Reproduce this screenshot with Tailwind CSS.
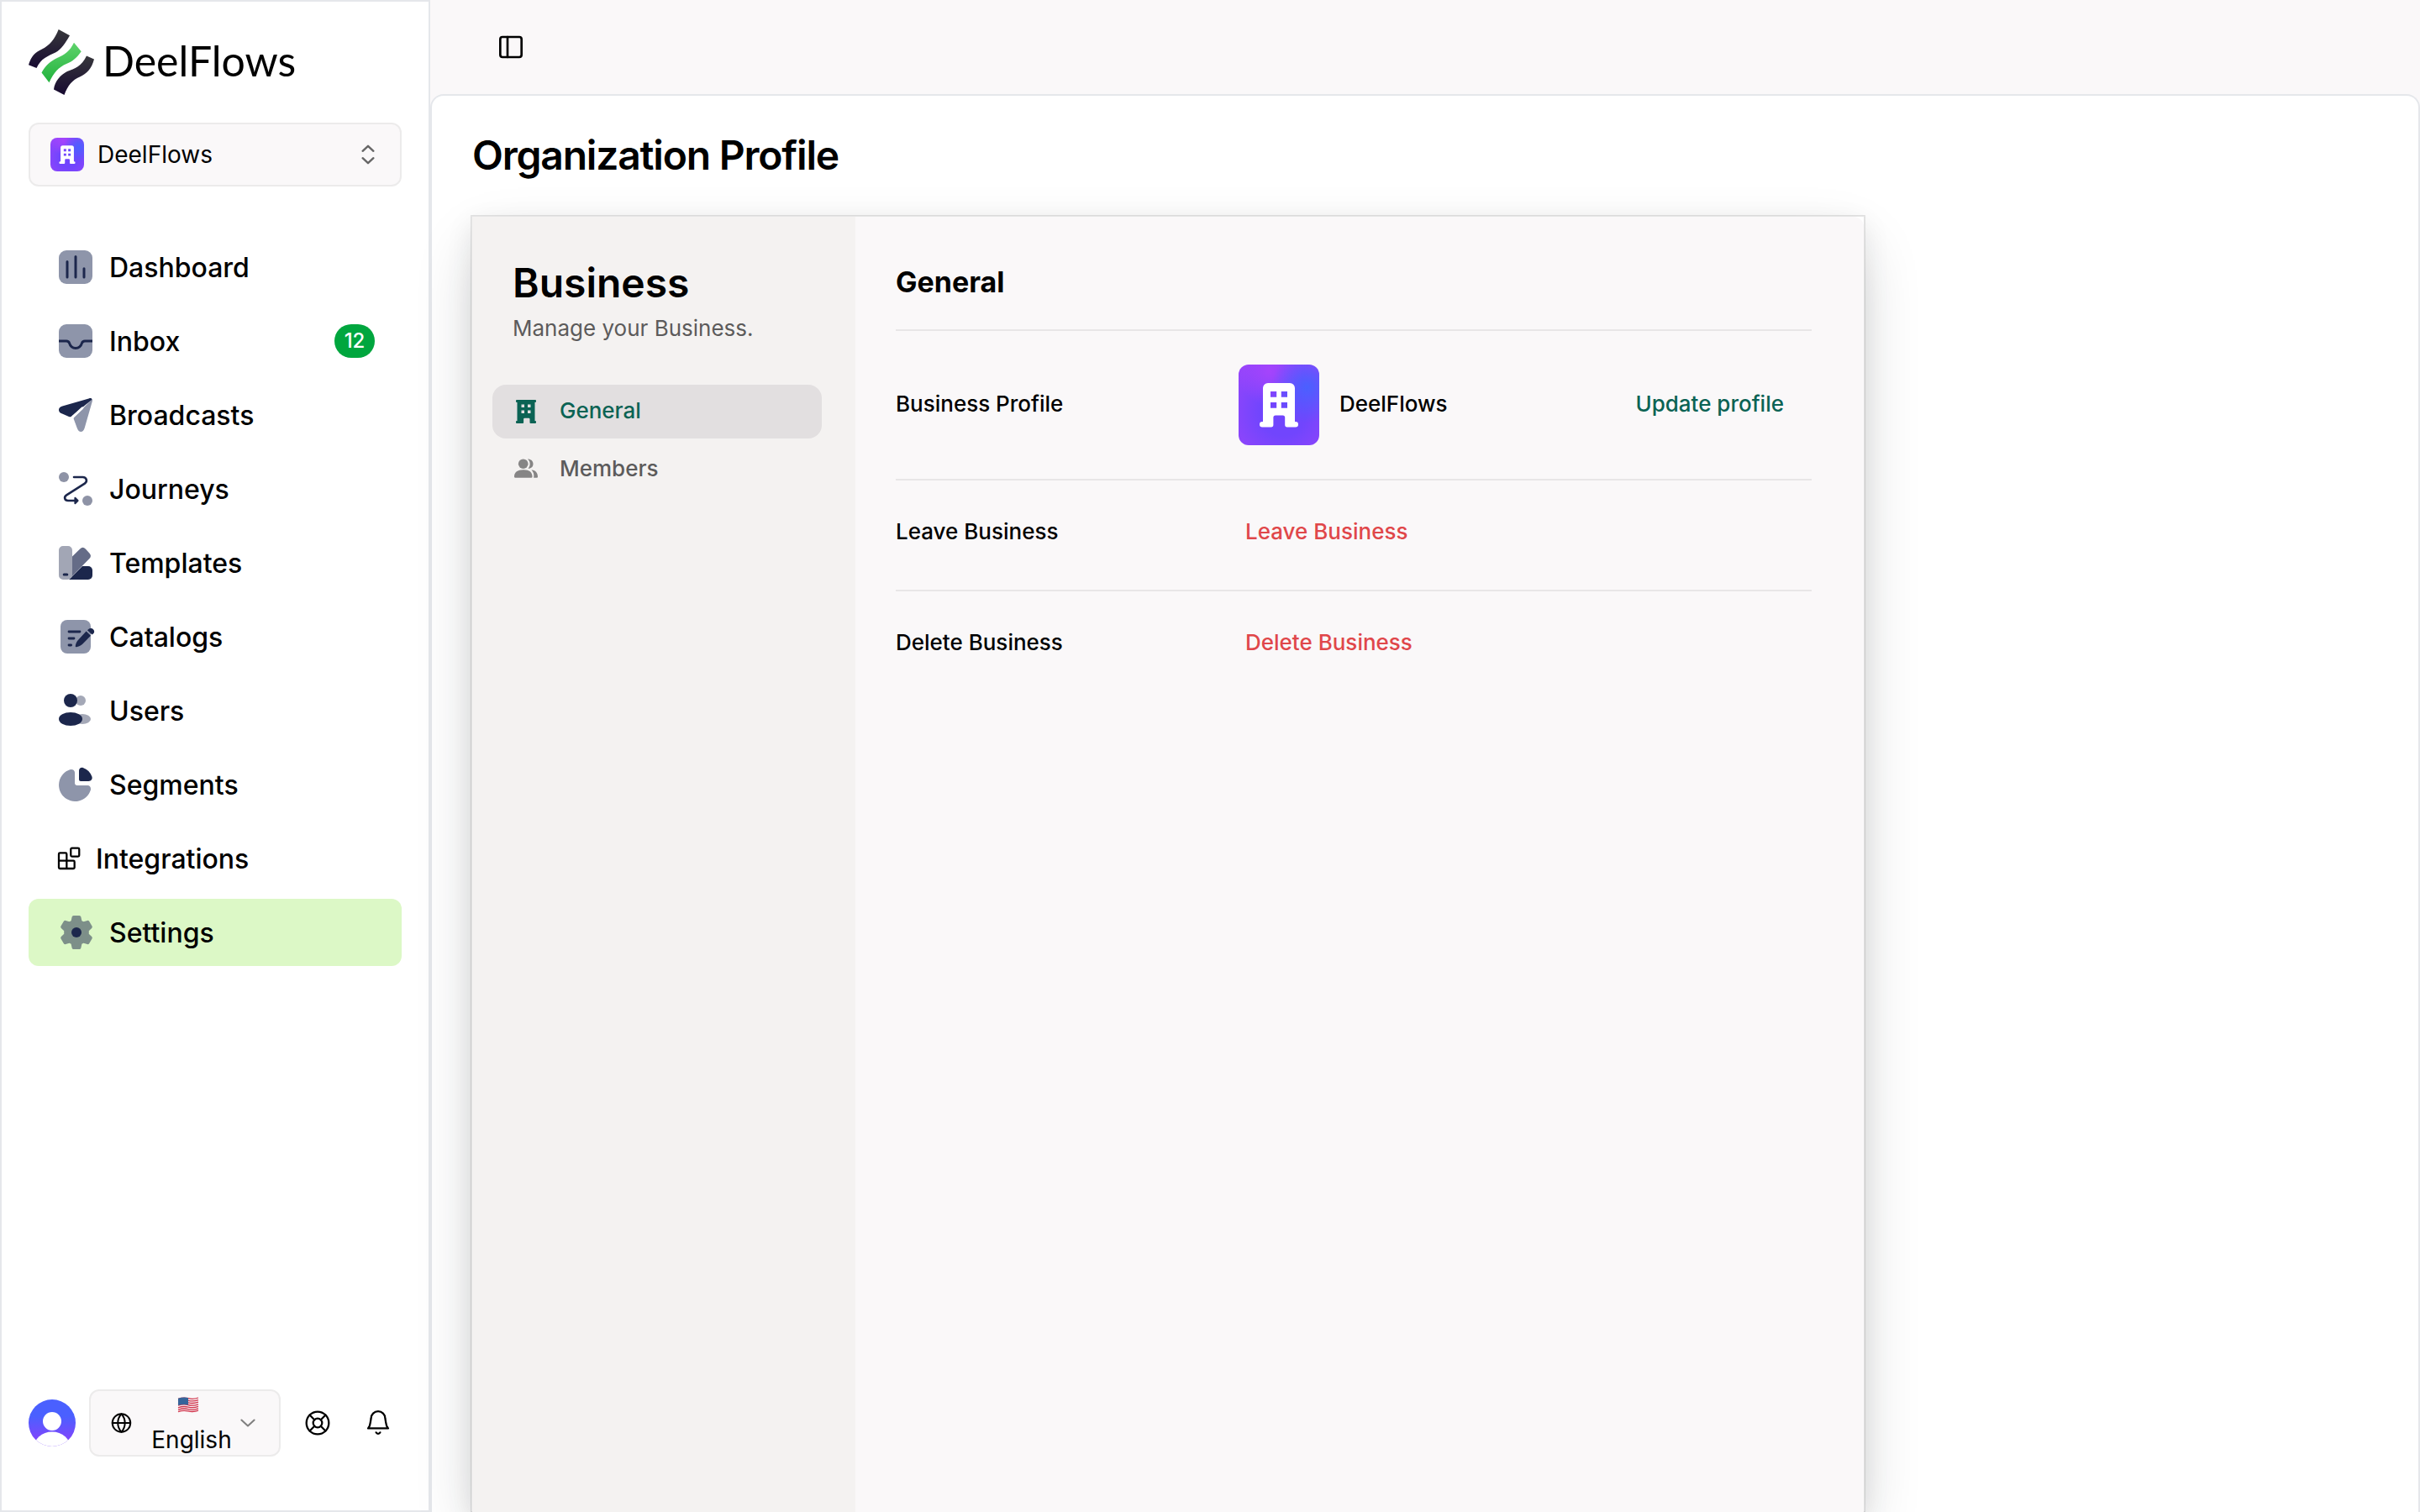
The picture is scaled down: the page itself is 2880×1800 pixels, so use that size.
<!DOCTYPE html>
<html lang="en">

<head>
  <meta charset="UTF-8" />
  <meta name="viewport" content="width=device-width, initial-scale=1" />
  <title>DeelFlows - Organization Profile</title>
  <script src="https://cdn.jsdelivr.net/npm/@tailwindcss/browser@4"></script>
</head>

<body class="flex h-screen overflow-hidden bg-[#faf8f9] font-['Inter',sans-serif] text-black antialiased">

  <!-- Shared symbols -->
  <svg class="hidden">
    <symbol id="building" viewBox="0 0 48 48">
      <path fill="currentColor" fill-rule="evenodd" d="M14.5 14a3 3 0 0 1 3-3h13a3 3 0 0 1 3 3v20h.4a1.6 1.6 0 0 1 1.6 1.6v0a1.6 1.6 0 0 1-1.6 1.6h-5a1.3 1.3 0 0 1-1.3-1.3v-4.4a1.3 1.3 0 0 0-1.3-1.3h-4.3a1.3 1.3 0 0 0-1.3 1.3v4.400a1.3 1.3 0 0 1-1.3 1.3h-5.3a1.6 1.6 0 0 1 0-3.200h.4zM19 16v3.4h3.6V16zm6.4 0v3.4h3.6V16zM19 22.5v3.4h3.6v-3.4zm6.4 0v3.4h3.6v-3.4z" />
    </symbol>
  </svg>

  <!-- Sidebar -->
  <aside class="flex w-[512px] shrink-0 flex-col border-2 border-[#e5e7eb] bg-white px-8">
    <div class="mt-8 flex h-[80px] items-center">
      <svg class="size-[80px] shrink-0" viewBox="0 0 80 80">
        <defs>
          <linearGradient id="dark" x1="0" y1="0" x2="0" y2="1">
            <stop offset="0" stop-color="#37373b" />
            <stop offset="1" stop-color="#170a31" />
          </linearGradient>
          <linearGradient id="green" x1="0" y1="0" x2="0" y2="1">
            <stop offset="0" stop-color="#5fd36c" />
            <stop offset="1" stop-color="#22b23d" />
          </linearGradient>
        </defs>
        <path fill="url(#dark)" d="M35.7 1 49 8.3C44 17 39 25 32 28.5C23 33 15 35 9.5 47L0 43.3C3 33 8 28 16 24.5C25 20 31 13 35.7 1Z" />
        <path fill="url(#green)" d="M54 16.700 62.7 27.3C57 35 53 39 45 42C36 46 30 52 24.5 64.3L15.5 52.5C20 44 26 39 34 35C43 31 49 27 54 16.700Z" />
        <path fill="url(#dark)" d="M69 32.5 78 36.5C75 48 69 54 61 57.500C52 61.500 47 67 42.5 79L30 72.5C31 63 38 55 46 51C55 47.500 63 45 69 32.5Z" />
      </svg>
      <span class="-mt-[5px] ml-[8px] font-['Lato',sans-serif] text-[50px] leading-none">DeelFlows</span>
    </div>

    <button class="mt-[32px] flex h-[76px] w-[444px] shrink-0 items-center rounded-xl border-2 border-[#ecebeb] bg-[#faf8f9] px-6">
      <span class="size-10 rounded-lg bg-[radial-gradient(circle_at_85%_28%,#4a60ff_0%,#4a60ff00_40%),radial-gradient(circle_at_38%_8%,#a544fc_0%,#a544fc00_38%),radial-gradient(circle_at_55%_60%,#7145fd_35%,#9a45fa_100%)] text-white">
        <svg class="size-10"><use href="#building" /></svg>
      </span>
      <span class="ml-4 text-[28px] leading-10">DeelFlows</span>
      <svg class="-mr-[2px] ml-auto size-8" viewBox="0 0 16 16" fill="none" stroke="#666" stroke-width="1.2" stroke-linecap="round" stroke-linejoin="round">
        <path d="M4.8 5.9 8 2.9l3.2 3M4.8 10.1 8 13.1l3.2-3" />
      </svg>
    </button>

    <nav class="mt-[56px] flex w-[444px] flex-col gap-2 text-[32px] font-medium leading-10">
      <a href="#" class="flex h-20 items-center gap-4 rounded-xl px-8">
        <svg class="size-12" viewBox="0 0 24 24">
          <rect x="2" y="2" width="20" height="20" rx="4.5" fill="#8e95aa" />
          <path d="M7 8.8v9.2M12 5.8v12.2M17 12.9v5.1" stroke="#1c274c" stroke-width="1.5" stroke-linecap="round" />
        </svg>
        <span class="pt-[2px]">Dashboard</span>
      </a>
      <a href="#" class="flex h-20 items-center gap-4 rounded-xl px-8">
        <svg class="size-12" viewBox="0 0 24 24">
          <rect x="2" y="2" width="20" height="20" rx="4.5" fill="#8e95aa" />
          <path d="M2 12h4.5c1 0 1.5.3 1.8 1.3.6 2 1.7 2.9 3.7 2.9s3.1-.9 3.7-2.9c.3-1 .8-1.3 1.8-1.3H22" fill="none" stroke="#1c274c" stroke-width="1.5" />
        </svg>
        <span class="pt-[2px]">Inbox</span>
        <span class="ml-auto flex h-10 w-12 items-center justify-center rounded-full bg-[#00a63e] text-2xl font-medium text-white">12</span>
      </a>
      <a href="#" class="flex h-20 items-center gap-4 rounded-xl px-8">
        <svg class="size-12" viewBox="0 0 24 24">
          <path fill="#8e95aa" d="M21.9 2.5c.2.4.1 1-.1 1.8l-4.5 15.6c-.8 2.8-3.5 2.8-4.4 0l-1.9-5.1c-.3-.8-.2-1.1.3-1.6z" />
          <path fill="#1c274c" d="M21.5 2.2c-.4-.3-1-.2-1.7 0L4.1 6.7C1.3 7.5 1.3 10.3 4 11.3l4 1.7c.7.3 1.1.2 1.6-.3L21.7 2.9z" />
          <path d="M10.3 13.1l5.7-5.2" stroke="#fff" stroke-width="1.4" stroke-linecap="round" />
        </svg>
        <span class="pt-[2px]">Broadcasts</span>
      </a>
      <a href="#" class="flex h-20 items-center gap-4 rounded-xl px-8">
        <svg class="size-12" viewBox="0 0 24 24">
          <circle cx="5" cy="5" r="3" fill="#8e93a6" />
          <circle cx="19" cy="19" r="3" fill="#8e93a6" />
          <path d="M11 5h5.2c2.4 0 3 2.6 1.2 3.8L6.6 15.7C4.8 16.9 5.5 19 7.5 19H12" fill="none" stroke="#1c274c" stroke-width="1.3" stroke-linecap="round" />
          <path d="M11.7 17.4 13.3 19l-1.6 1.6z" fill="#1c274c" stroke="#1c274c" stroke-width="1" stroke-linejoin="round" />
        </svg>
        <span class="pt-[2px]">Journeys</span>
      </a>
      <a href="#" class="flex h-20 items-center gap-4 rounded-xl px-8">
        <svg class="size-12" viewBox="0 0 24 24">
          <path fill="#1c274c" d="M8 22h11.5a2.5 2.5 0 0 0 2.5-2.5v-3a2.5 2.5 0 0 0-2.5-2.5H16z" />
          <path fill="#656c87" d="M10 8.2 14.6 3.7a2.4 2.4 0 0 1 3.3 0l2.3 2.5a2.4 2.4 0 0 1 0 3.3L8.5 21.4z" />
          <path fill="#a2a6b5" d="M2 4.5A2.5 2.5 0 0 1 4.5 2h3A2.5 2.5 0 0 1 10 4.5v14.7A2.8 2.8 0 0 1 7.2 22H4.5A2.5 2.5 0 0 1 2 19.5z" />
          <path d="M5.1 19h1.8" stroke="#1c274c" stroke-width="1.5" stroke-linecap="round" />
        </svg>
        <span class="pt-[2px]">Templates</span>
      </a>
      <a href="#" class="flex h-20 items-center gap-4 rounded-xl px-8">
        <svg class="size-12" viewBox="0 0 24 24">
          <rect x="3" y="2" width="18" height="20" rx="4" fill="#8e95aa" />
          <path d="M8 9h6.5M8 13h3M8 17h1.3" stroke="#1c274c" stroke-width="1.4" stroke-linecap="round" />
          <path fill="#1c274c" d="M18.3 8.8 21 11.4l-4.9 5c-1 1-2.3 1.5-3.6 1.7-.5.1-.7-.1-.6-.6.2-1.3.7-2.6 1.7-3.6z" />
          <path fill="#1c274c" d="M19 8.1c1.3-1.5 2.7-1.3 3.5-.5s1 2.2-.8 3.2z" />
        </svg>
        <span class="pt-[2px]">Catalogs</span>
      </a>
      <a href="#" class="flex h-20 items-center gap-4 rounded-xl px-8">
        <svg class="size-12" viewBox="0 0 24 24">
          <circle cx="15" cy="6" r="3" fill="#a4a8b7" />
          <ellipse cx="16" cy="17" rx="5" ry="3" fill="#a4a8b7" />
          <circle cx="9" cy="6" r="4" fill="#1c274c" />
          <ellipse cx="9" cy="17" rx="7" ry="4" fill="#1c274c" />
        </svg>
        <span class="pt-[2px]">Users</span>
      </a>
      <a href="#" class="flex h-20 items-center gap-4 rounded-xl px-8">
        <svg class="size-12" viewBox="0 0 24 24">
          <path fill="#8e95aa" d="M8.6 3.1c1.5-.5 2.9.3 2.9 1.8v6.2c0 .8.6 1.4 1.4 1.4h6.2c1.5 0 2.2 1.4 1.8 2.9A9.7 9.7 0 1 1 8.6 3.1z" />
          <path fill="#1c274c" d="M14 3.8c0-1.3 1.1-2.2 2.4-1.8a8.6 8.6 0 0 1 5.3 5.3c.5 1.5-.5 2.7-2 2.7H15a1 1 0 0 1-1-1z" />
        </svg>
        <span class="pt-[2px]">Segments</span>
      </a>
      <a href="#" class="flex h-20 items-center gap-4 rounded-xl px-8">
        <svg class="size-8" viewBox="0 0 24 24" fill="none" stroke="currentColor" stroke-width="1.7" stroke-linecap="round" stroke-linejoin="round">
          <rect width="7.500" height="7.500" x="13.700" y="2.700" rx="1" />
          <path d="M10 21V8a1 1 0 0 0-1-1H4a1 1 0 0 0-1 1v12a1 1 0 0 0 1 1h12a1 1 0 0 0 1-1v-5a1 1 0 0 0-1-1H3" />
        </svg>
        <span class="pt-[2px]">Integrations</span>
      </a>
      <a href="#" class="flex h-20 items-center gap-4 rounded-xl bg-[#dcf8c6] px-8">
        <svg class="size-12" viewBox="0 0 24 24">
          <path fill="#7d8f89" stroke="#7d8f89" stroke-width="2" stroke-linejoin="round" d="M10.8 3h3.4l.6 2.7 1.8 1 2.6-.8 1.7 2.9-2 1.9v2.6l2 1.9-1.7 2.9-2.6-.8-1.8 1-.6 2.7h-3.4l-.6-2.700-1.8-1-2.6.8-1.7-2.9 2-1.900v-2.600l-2-1.900 1.700-2.900 2.600.800 1.800-1z" />
          <circle cx="12.5" cy="12" r="3" fill="#1c274c" />
        </svg>
        <span class="pt-[2px]">Settings</span>
      </a>
    </nav>

    <!-- Footer controls -->
    <div class="mb-16 mt-auto flex items-center">
      <svg class="size-14 shrink-0" viewBox="0 0 56 56">
        <defs>
          <linearGradient id="avatar" x1="0" y1="0" x2="0" y2="1">
            <stop offset="0.35" stop-color="#4a60ff" />
            <stop offset="0.8" stop-color="#7a48fc" />
          </linearGradient>
          <clipPath id="round"><circle cx="28" cy="28" r="28" /></clipPath>
        </defs>
        <g clip-path="url(#round)">
          <rect width="56" height="56" fill="url(#avatar)" />
          <circle cx="28" cy="26" r="11" fill="#fff" />
          <ellipse cx="28" cy="58" rx="22" ry="19.5" fill="#fff" />
        </g>
      </svg>
      <button class="ml-4 flex h-20 w-[228px] items-center rounded-xl border-2 border-[#ecebeb] bg-[#faf8f9] pl-[22px]">
        <svg class="size-7" viewBox="0 0 24 24" fill="none" stroke="currentColor" stroke-width="1.7" stroke-linecap="round" stroke-linejoin="round">
          <circle cx="12.4" cy="12" r="9.2" />
          <path d="M12.4 2.8c-4.8 5.2-4.8 13.2 0 18.4 4.8-5.2 4.8-13.2 0-18.4M3.2 12h18.4" />
        </svg>
        <span class="ml-[22px] flex w-[96px] flex-col items-center text-[28px] leading-10">
          <svg class="mb-[12px] mr-[8px] mt-[6px] h-5 w-[26px]" viewBox="0 0 26 20">
            <path fill="#f5f3f4" d="M1 3Q7 .5 13 2T25 1v16q-6 2-12 1T1 19z" />
            <path fill="none" stroke="#d3354d" stroke-width="1.3" d="M1 3.4q6-2.2 12-.7t12-.7M1 6q6-2.2 12-.7t12-.7M1 8.6q6-2.2 12-.7t12-.7M1 11.2q6-2.2 12-.7t12-.7M1 13.8q6-2.2 12-.7t12-.7M1 16.3q6-2.2 12-.7t12-.7M1 18.6q6-2.2 12-.7t12-.7" />
            <path fill="#36649a" d="M1 2.8Q7 .8 13 2v8.500Q7 9.300 1 11z" />
          </svg>
          <span class="pt-[1px] leading-[38px]">English</span>
        </span>
        <svg class="ml-[5px] size-7" viewBox="0 0 24 24" fill="none" stroke="#808080" stroke-width="1.8" stroke-linecap="round" stroke-linejoin="round">
          <path d="m5.5 9 6.5 6 6.5-6" />
        </svg>
      </button>
      <svg class="ml-7 size-8" viewBox="0 0 24 24" fill="none" stroke="currentColor" stroke-width="1.7" stroke-linecap="round" stroke-linejoin="round">
        <circle cx="12" cy="12" r="10" />
        <circle cx="12" cy="12" r="4" />
        <path d="m4.93 4.93 4.24 4.24M14.83 9.17l4.24-4.24M14.83 14.83l4.24 4.24M9.17 14.83l-4.24 4.24" />
      </svg>
      <svg class="ml-10 size-8" viewBox="0 0 24 24" fill="none" stroke="currentColor" stroke-width="1.7" stroke-linecap="round" stroke-linejoin="round">
        <path d="M3 16.8h18c-1.2-1.3-1.9-2.9-2.1-5.3L18.3 7.9a6.3 6.3 0 0 0-12.6 0l-.6 3.6C4.9 13.9 4.2 15.5 3 16.8zM10.2 20.5a2 2 0 0 0 3.6 0" />
      </svg>
    </div>
  </aside>

  <!-- Main -->
  <div class="flex min-w-0 flex-1 flex-col">
    <header class="flex h-28 shrink-0 items-center px-20">
      <svg class="size-8" viewBox="0 0 24 24" fill="none" stroke="currentColor" stroke-width="2" stroke-linecap="round" stroke-linejoin="round">
        <rect width="19" height="18" x="2.5" y="3" rx="2" />
        <path d="M9 3v18" />
      </svg>
    </header>

    <main class="flex flex-1 flex-col rounded-t-2xl border-x-2 border-t-2 border-[#e5e7eb] bg-white px-[46px]">
      <h1 class="mt-[42px] pl-[2px] text-[48px] font-semibold leading-[58px] tracking-[-0.025em]">Organization Profile</h1>

      <div class="mt-[42px] flex w-[1660px] flex-1 border-2 border-b-0 border-black/10 bg-white bg-clip-padding shadow-[0_10px_30px_rgba(0,0,0,0.08),0_30px_70px_-10px_rgba(25,28,33,0.2)]">
        <aside class="w-[456px] bg-[#f4f2f1] px-6 pt-[51px]">
          <h2 class="pl-6 text-[48px] font-semibold leading-[56px]">Business</h2>
          <p class="mt-[8px] pl-6 text-[26px] leading-[36px] text-[#5c5b5b]">Manage your Business.</p>
          <nav class="mt-[49px] flex flex-col gap-1 text-[26px] font-medium">
            <a href="#" class="flex h-16 w-[392px] items-center rounded-2xl bg-[#e2dfe0] pl-6 text-[#0b6354]">
              <svg class="size-8" viewBox="0 0 32 32">
                <path fill="currentColor" fill-rule="evenodd" d="M5 2h22a1 1 0 0 1 1 1v1a1 1 0 0 1-1 1h-.5v22h.5a1 1 0 0 1 1 1v1a1 1 0 0 1-1 1h-5.500a1 1 0 0 1-1-1v-4a1.200 1.200 0 0 0-1.200-1.200h-5a1.200 1.200 0 0 0-1.200 1.200v4a1 1 0 0 1-1 1H5a1 1 0 0 1-1-1v-1a1 1 0 0 1 1-1h.5V5H5a1 1 0 0 1-1-1V3a1 1 0 0 1 1-1zM10.500 7.500V11H14V7.500zm7.500 0V11h3.500V7.500zM10.500 14.500V18H14v-3.500zm7.500 0V18h3.500v-3.500z" />
              </svg>
              <span class="-mt-[3px] ml-6">General</span>
            </a>
            <a href="#" class="flex h-16 w-[392px] items-center rounded-2xl pl-6 text-[#5c5b5b]">
              <svg class="size-8" viewBox="0 0 32 32" fill="#868585">
                <circle cx="12.700" cy="10.200" r="5.800" />
                <path d="M18 4.400c4 0 6.500 2.400 6.500 5.800s-2.500 5.800-6 5.500c3-3.200 3-8.200-.5-11.300zM2 25.500C2 20.200 6 17.300 13 17.300s10.500 2.900 10.500 8.200c0 .8-.4 1.200-1 1.200H3c-.6 0-1-.4-1-1.200zM23 17.500c4.500.5 7 3.700 7 8 0 .8-.3 1.200-1 1.200h-3.800c.6-4-.2-6.700-2.700-9.200z" />
              </svg>
              <span class="-mt-[2px] ml-6">Members</span>
            </a>
          </nav>
        </aside>

        <section class="flex-1 rounded-tr-xl bg-[#faf8f9] px-12 pt-[54px] text-[26px] font-medium">
          <h3 class="text-[34px] font-bold leading-[48px]">General</h3>
          <div class="mt-[32px] flex h-[178px] w-[1090px] items-center border-t-2 border-[#e8e6e7]">
            <span class="-mt-[3px] w-[408px]">Business Profile</span>
            <span class="size-24 rounded-xl bg-[radial-gradient(circle_at_85%_28%,#4a60ff_0%,#4a60ff00_40%),radial-gradient(circle_at_38%_8%,#a544fc_0%,#a544fc00_38%),radial-gradient(circle_at_55%_60%,#7145fd_35%,#9a45fa_100%)] text-white">
              <svg class="size-24"><use href="#building" /></svg>
            </span>
            <span class="-mt-[3px] ml-6">DeelFlows</span>
            <a href="#" class="-mt-[3px] ml-auto pr-[33px] text-[#0b6354]">Update profile</a>
          </div>
          <div class="flex h-[132px] w-[1090px] items-center border-t-2 border-[#e8e6e7] pb-[10px]">
            <span class="w-[416px]">Leave Business</span>
            <a href="#" class="text-[#e0474a]">Leave Business</a>
          </div>
          <div class="flex h-[132px] w-[1090px] items-center border-t-2 border-[#e8e6e7] pb-[10px]">
            <span class="w-[416px]">Delete Business</span>
            <a href="#" class="text-[#e0474a]">Delete Business</a>
          </div>
        </section>
      </div>
    </main>
  </div>
</body>

</html>
